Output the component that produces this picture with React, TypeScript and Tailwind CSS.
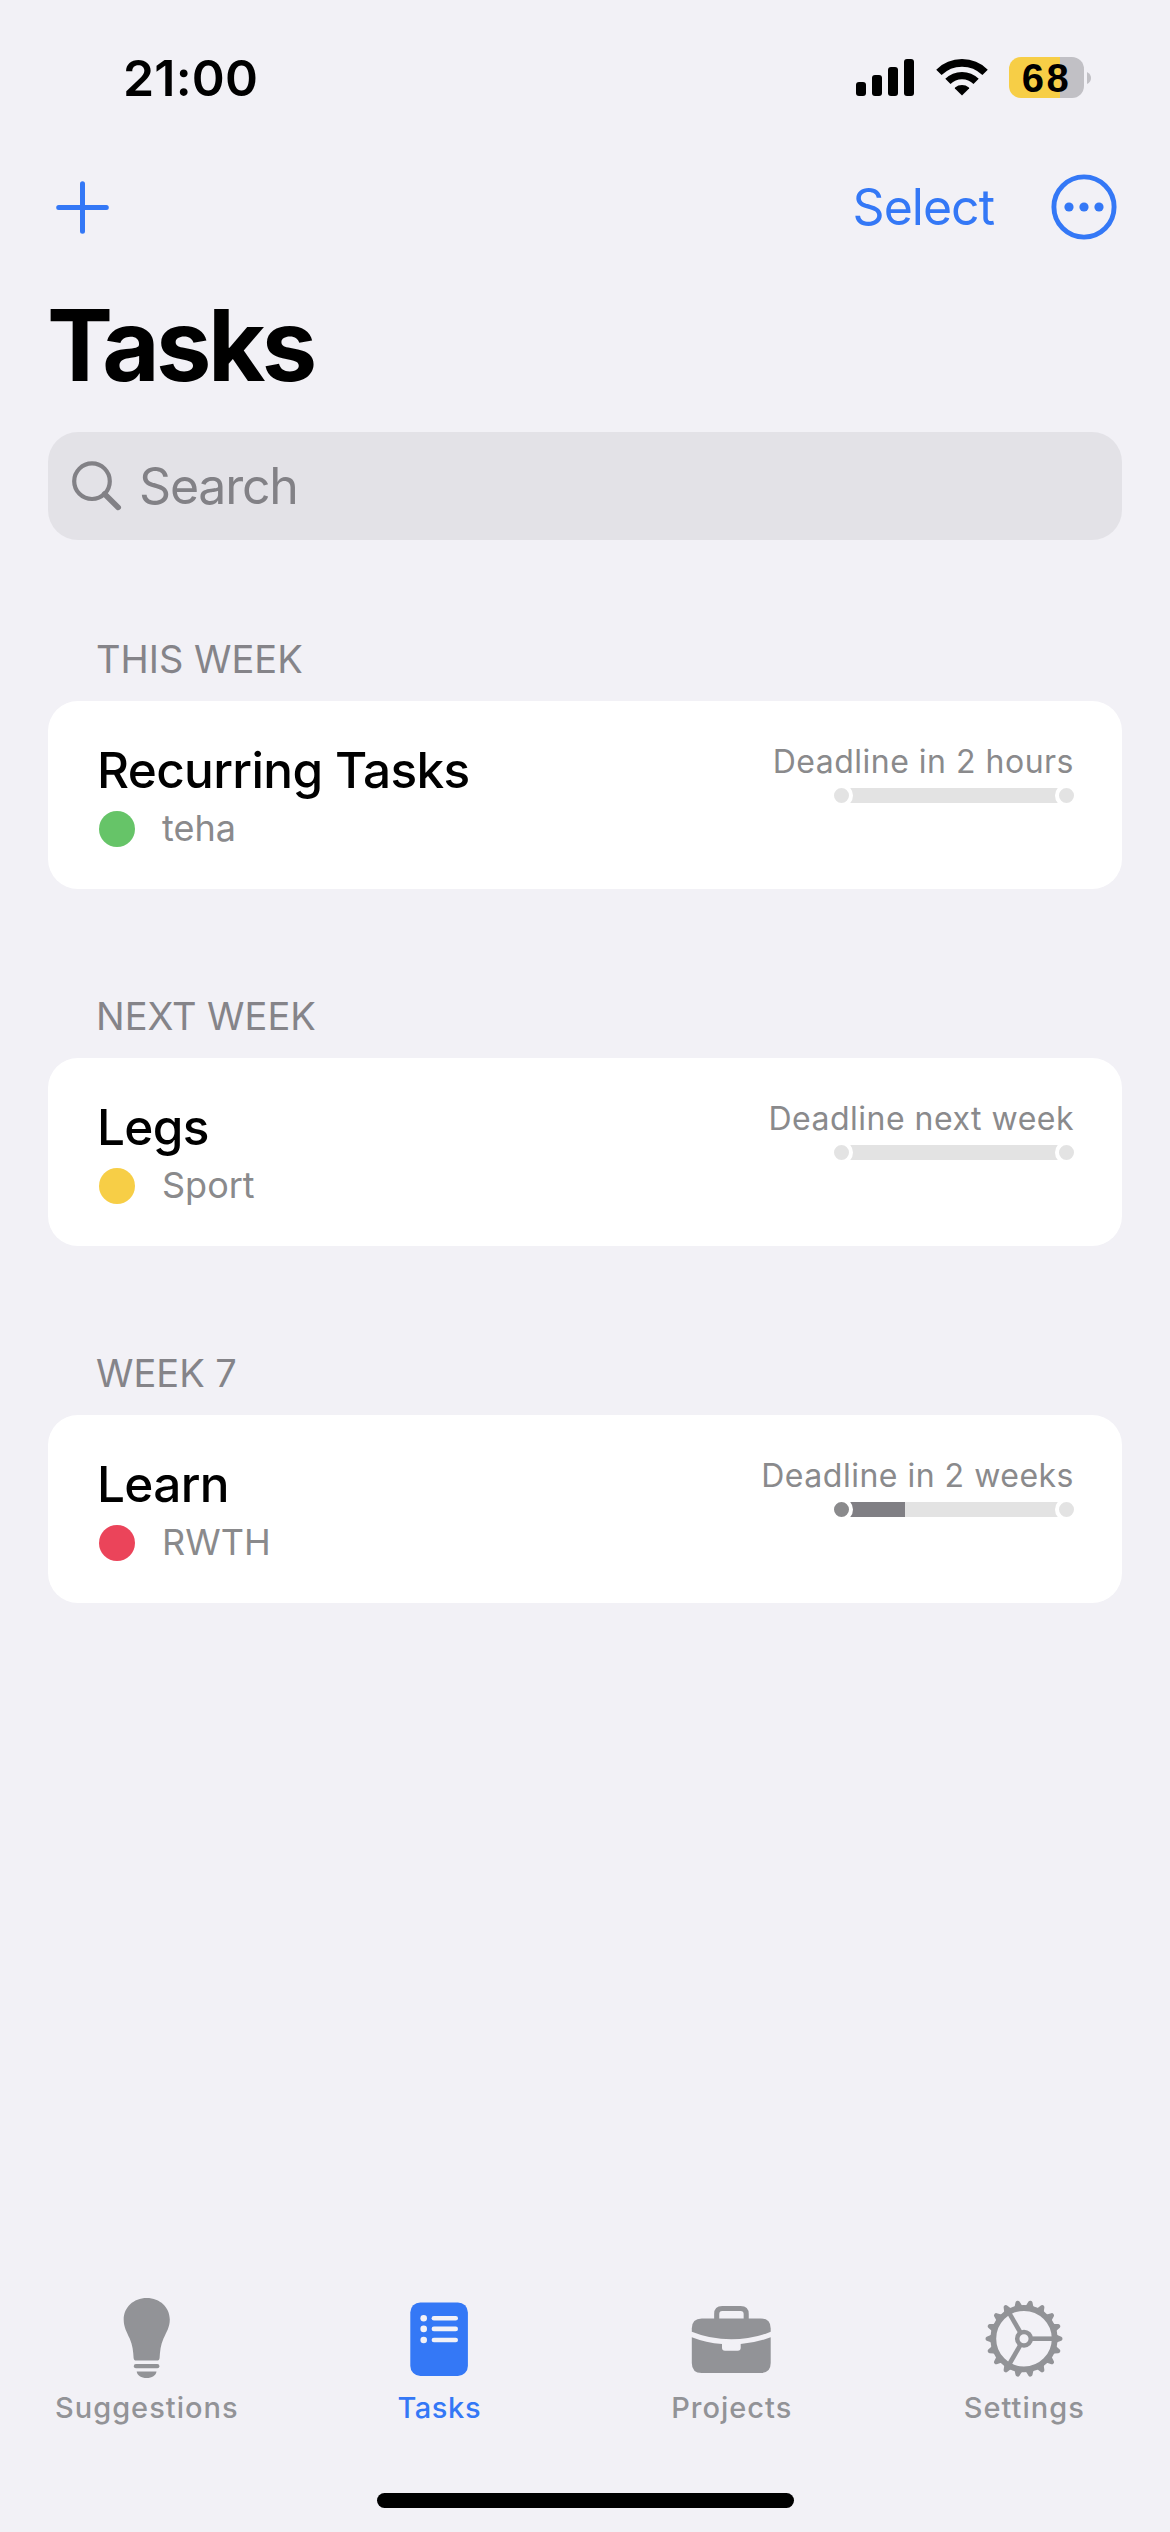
type Task = {
  section: string;
  title: string;
  project: string;
  color: string;
  deadline: string;
  progress: number;
};

const tasks: Task[] = [
  { section: "THIS WEEK", title: "Recurring Tasks", project: "teha", color: "bg-[#66c468]", deadline: "Deadline in 2 hours", progress: 0 },
  { section: "NEXT WEEK", title: "Legs", project: "Sport", color: "bg-[#f7ce46]", deadline: "Deadline next week", progress: 0 },
  { section: "WEEK 7", title: "Learn", project: "RWTH", color: "bg-[#eb445a]", deadline: "Deadline in 2 weeks", progress: 71 / 240 },
];

function SignalIcon() {
  return (
    <svg width="58" height="37" viewBox="0 0 58 37">
      <rect x="0" y="23" width="10" height="14" rx="3" />
      <rect x="16" y="16" width="10" height="21" rx="3" />
      <rect x="32" y="8" width="10" height="29" rx="3" />
      <rect x="48" y="0" width="10" height="37" rx="3" />
    </svg>
  );
}

function WifiIcon() {
  return (
    <svg width="52" height="37" viewBox="0 0 52 37">
      <g fill="none" stroke="#000">
        <path d="M2.9 13.4A32.8 32.8 0 0 1 49.1 13.4" strokeWidth="7.6" />
        <path d="M11.9 22.4A20 20 0 0 1 40.1 22.4" strokeWidth="7.4" />
      </g>
      <path d="M26 36.6L18.9 29.5Q18.6 29 19.1 28.5A11.2 11.2 0 0 1 32.9 28.5Q33.4 29 33.1 29.5Z" />
    </svg>
  );
}

function Battery() {
  return (
    <div className="flex items-center gap-[3px]">
      <div className="flex h-[41px] w-[75px] items-center justify-center rounded-[12px] bg-linear-to-r from-[#f7ce46] from-[68%] to-[#c1c0c5] to-[68%] font-['Liberation_Sans',sans-serif] text-[40px] leading-none font-bold tracking-[2.5px]">
        68
      </div>
      <svg width="4" height="12" viewBox="0 0 4 12">
        <path d="M0 0Q4 2 4 6Q4 10 0 12Z" fill="#c1c0c5" />
      </svg>
    </div>
  );
}

function PlusIcon() {
  return (
    <svg width="53" height="53" viewBox="0 0 53 53" fill="none" stroke="#3478f6" strokeWidth="5" strokeLinecap="round">
      <path d="M26.5 2.7V50.3M2.7 26.5H50.3" />
    </svg>
  );
}

function MoreIcon() {
  return (
    <svg width="66" height="66" viewBox="0 0 66 66" fill="#3478f6">
      <circle cx="33" cy="33" r="30.1" fill="none" stroke="#3478f6" strokeWidth="4.9" />
      <circle cx="18" cy="33" r="4.6" />
      <circle cx="33" cy="33" r="4.6" />
      <circle cx="48" cy="33" r="4.6" />
    </svg>
  );
}

function SearchIcon() {
  return (
    <svg width="50" height="50" viewBox="0 0 50 50" fill="none" stroke="#828186">
      <circle cx="20" cy="20.2" r="17.8" strokeWidth="4.2" />
      <path d="M32.6 33L46.2 46.4" strokeWidth="5.6" strokeLinecap="round" />
    </svg>
  );
}

function BulbIcon() {
  return (
    <svg width="90" height="90" viewBox="0 0 90 90" fill="currentColor">
      <path d="M45.7 4C59 4 68.8 13.5 68.8 25.5C68.8 33 65.5 38 62.5 44.5C59.5 51 59 57.5 58.6 64C58.5 65.7 57.5 66.6 56 66.6H35.2C33.7 66.6 32.7 65.7 32.6 64C32.3 57.5 31.6 51 28.7 44.5C25.7 38 22.7 33 22.7 25.5C22.7 13.5 32.5 4 45.7 4Z" />
      <rect x="32.8" y="70" width="25.6" height="4.3" rx="2.1" />
      <path d="M35.7 77.5H55.5C55 81.5 51 84 45.6 84C40.2 84 36.2 81.5 35.7 77.5Z" />
    </svg>
  );
}

function ListIcon() {
  return (
    <svg width="90" height="90" viewBox="0 0 90 90">
      <rect x="16.3" y="8.4" width="57.6" height="73.5" rx="10" fill="currentColor" />
      <g fill="#f2f1f6">
        {[24.2, 34.9, 46].map((y) => (
          <g key={y}>
            <circle cx="29.7" cy={y} r="3.3" />
            <rect x="37.6" y={y - 2.3} width="26.4" height="4.6" rx="2.3" />
          </g>
        ))}
      </g>
    </svg>
  );
}

function BriefcaseIcon() {
  return (
    <svg width="90" height="90" viewBox="0 0 90 90" fill="currentColor">
      <path d="M30.7 27V20Q30.7 14.5 36.2 14.5H54.6Q60.2 14.5 60.2 20V27" fill="none" stroke="currentColor" strokeWidth="5.1" />
      <path d="M5.8 37.7V34.5Q5.8 24.5 15.8 24.5H74.7Q84.7 24.5 84.7 34.5V37.7Q66 45.3 45.2 45.3Q24.5 45.3 5.8 37.7Z" />
      <path d="M5.8 43.2Q20 48.8 36 50V53.7Q36 56.7 39 56.7H51.7Q54.7 56.7 54.7 53.7V50Q70.5 48.8 84.7 43.2V69Q84.7 79 74.7 79H15.8Q5.8 79 5.8 69Z" />
    </svg>
  );
}

function GearIcon() {
  const teeth = Array.from({ length: 18 }, (_, i) => i * 20);
  return (
    <svg width="90" height="90" viewBox="0 0 90 90" fill="currentColor">
      <g transform="translate(45 44.7)">
        <circle r="30.7" fill="none" stroke="currentColor" strokeWidth="5.8" />
        {teeth.map((a) => (
          <path key={a} transform={`rotate(${a})`} d="M31.5 -5.2L33.8 -3.4L37.3 -2Q38.5 -1.5 38.5 0Q38.5 1.5 37.3 2L33.8 3.4L31.5 5.2Z" />
        ))}
        <circle r="6.8" fill="none" stroke="currentColor" strokeWidth="4.5" />
        {[0, 120, 240].map((a) => (
          <rect key={a} transform={`rotate(${a})`} x="7.5" y="-2.3" width="22" height="4.6" />
        ))}
      </g>
    </svg>
  );
}

function ProgressBar({ value }: { value: number }) {
  return (
    <div className="relative mr-[-2px] h-[15px] w-[240px] overflow-hidden bg-[#e3e3e3]">
      <div className="h-full bg-[#807f84]" style={{ width: `${value * 100}%` }} />
      <div className="absolute top-0 left-0 h-full w-[15px] bg-white" />
      <div className="absolute top-0 right-0 h-full w-[15px] bg-white" />
      <div className={`absolute top-[-4px] left-[-4px] size-[23px] rounded-full border-4 border-white ${value > 0 ? "bg-[#8a8a8c]" : "bg-[#e3e3e3]"}`} />
      <div className="absolute top-[-4px] right-[-4px] size-[23px] rounded-full border-4 border-white bg-[#e3e3e3]" />
    </div>
  );
}

function TaskSection({ task }: { task: Task }) {
  return (
    <section>
      <h2 className="flex h-[83px] items-center pb-[2px] pl-12 text-[38px] leading-none text-[#858489]">{task.section}</h2>
      <div className="flex h-[188px] justify-between rounded-[30px] bg-white px-[50px]">
        <div className="pt-[30px]">
          <div className="ml-[-1px] flex h-20 items-center text-[49.5px] leading-none font-medium tracking-[-0.65px] text-black">{task.title}</div>
          <div className="ml-px flex h-9 items-center gap-[27px]">
            <span className={`size-9 rounded-full ${task.color}`} />
            <span className="pb-[2px] text-[36px] leading-none text-[#8a8a8c]">{task.project}</span>
          </div>
        </div>
        <div className="flex flex-col items-end pt-[34px]">
          <div className="mr-[-2px] flex h-[53px] items-center text-[32px] leading-none tracking-[0.5px] text-[#8a8a8c]">{task.deadline}</div>
          <ProgressBar value={task.progress} />
        </div>
      </div>
    </section>
  );
}

const tabs = [
  { label: "Suggestions", Icon: BulbIcon, active: false },
  { label: "Tasks", Icon: ListIcon, active: true },
  { label: "Projects", Icon: BriefcaseIcon, active: false },
  { label: "Settings", Icon: GearIcon, active: false },
];

export default function App() {
  return (
    <div className="flex h-[2532px] w-[1170px] flex-col overflow-hidden bg-[#f2f1f6] font-['Inter',sans-serif] text-black">
      <header className="flex h-[155px] shrink-0 items-center justify-between pr-[79px] pl-[123px]">
        <div className="text-[50px] leading-none font-semibold tracking-[0.2px]">21:00</div>
        <div className="flex items-center">
          <SignalIcon />
          <div className="mx-[21.5px]">
            <WifiIcon />
          </div>
          <Battery />
        </div>
      </header>

      <nav className="flex h-[104px] shrink-0 items-center justify-between pr-[53px] pl-14 text-[#3478f6]">
        <PlusIcon />
        <div className="flex items-center gap-[57px]">
          <span className="text-[50px] leading-none tracking-[-1px]">Select</span>
          <MoreIcon />
        </div>
      </nav>

      <h1 className="flex h-[173px] shrink-0 items-center pl-[47px] text-[99px] leading-none font-bold tracking-[-3.6px]">Tasks</h1>

      <div className="mx-12 flex h-[108px] shrink-0 items-center gap-[17px] rounded-[30px] bg-[#e3e2e7] pl-6 text-[#828186]">
        <SearchIcon />
        <span className="text-[50px] leading-none tracking-[-1.2px]">Search</span>
      </div>

      <main className="mx-12 mt-[78px] flex grow flex-col gap-[86px]">
        {tasks.map((t) => (
          <TaskSection key={t.section} task={t} />
        ))}
      </main>

      <footer className="flex h-[238px] shrink-0 flex-col items-center justify-between pb-6">
        <div className="grid w-full grid-cols-4">
          {tabs.map(({ label, Icon, active }) => (
            <div key={label} className={`flex flex-col items-center ${active ? "text-[#3478f6]" : "text-[#929397]"}`}>
              <Icon />
              <span className={`flex h-[46px] items-center pl-px text-[29px] leading-none font-medium ${active ? "tracking-[0.6px]" : "tracking-[1px]"}`}>{label}</span>
            </div>
          ))}
        </div>
        <div className="h-[15px] w-[417px] rounded-full bg-black" />
      </footer>
    </div>
  );
}
